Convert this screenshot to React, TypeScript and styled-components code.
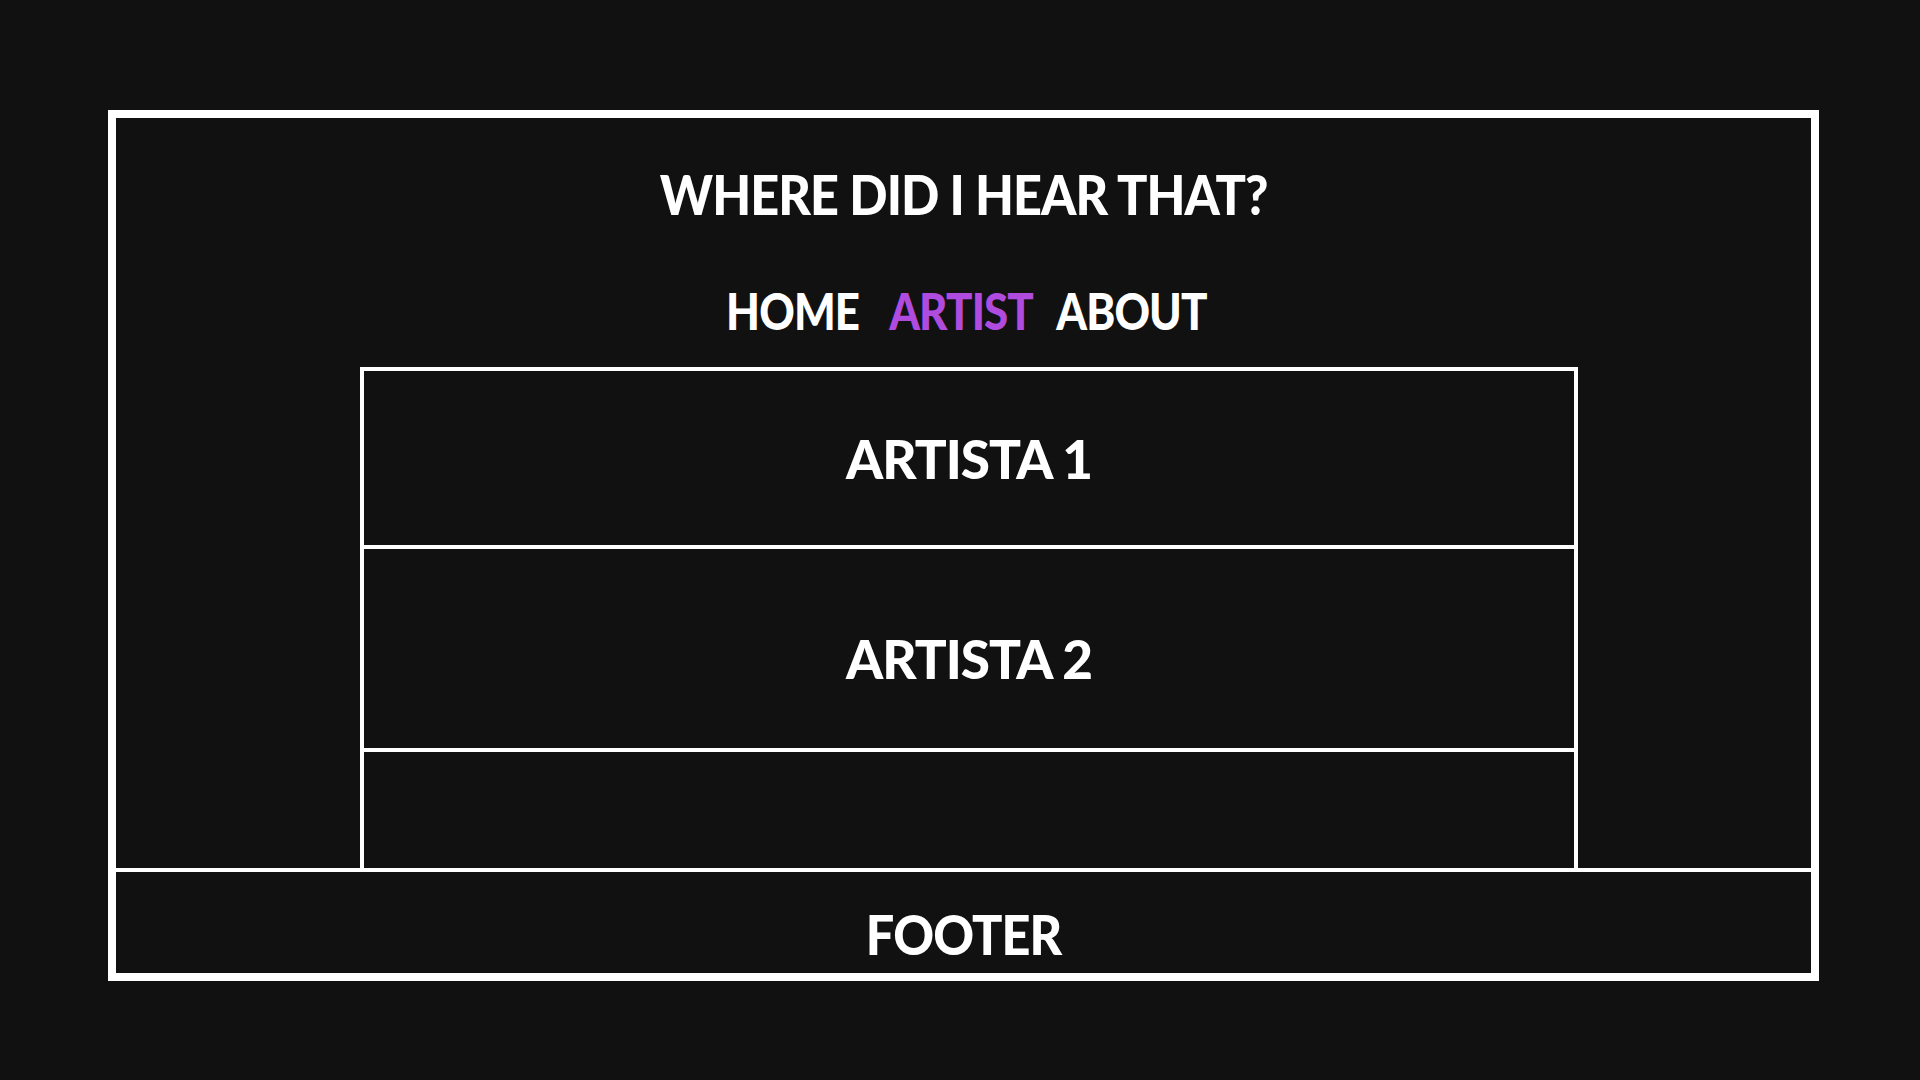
import styled, { createGlobalStyle } from "styled-components";

const GlobalStyle = createGlobalStyle`
  html, body {
    margin: 0;
    padding: 0;
    background: #111111;
  }
  body {
    font-family: Lato, "Noto Sans", sans-serif;
    color: #ffffff;
  }
`;

const artists = ["ARTISTA 1", "ARTISTA 2", ""];

const Frame = styled.div`
  box-sizing: border-box;
  display: flex;
  flex-direction: column;
  width: 1711px;
  height: 871px;
  margin: 110px 0 0 108px;
  border: 8px solid #ffffff;
`;

const Header = styled.header`
  display: flex;
  flex-direction: column;
  align-items: center;
  padding-top: 48px;
`;

// the sketch font is a narrow geometric sans, so Lato is squeezed a bit
const Title = styled.h1`
  margin: 0;
  font-size: 56px;
  font-weight: 900;
  line-height: 1;
  letter-spacing: -1px;
  transform: scaleX(0.9);
`;

const Nav = styled.nav`
  display: flex;
  align-items: center;
  margin-top: 63px;
  transform: translateX(3px) scaleX(0.86);
`;

const NavLink = styled.a<{ $active?: boolean; $gap?: number }>`
  font-size: 51px;
  font-weight: 900;
  line-height: 1;
  letter-spacing: -1px;
  margin-left: ${(p) => p.$gap ?? 0}px;
  color: ${(p) => (p.$active ? "#b04be0" : "#ffffff")};
  text-decoration: none;
`;

const Main = styled.main`
  flex: 1;
  display: flex;
  padding-top: 31px;
`;

const List = styled.section`
  box-sizing: border-box;
  display: flex;
  flex-direction: column;
  width: 1218px;
  margin-left: 244px;
  border: 4px solid #ffffff;
  border-bottom: none;
`;

const Row = styled.div<{ $h?: number; $shift?: number }>`
  box-sizing: border-box;
  display: flex;
  align-items: center;
  justify-content: center;
  height: ${(p) => (p.$h ? `${p.$h}px` : "auto")};
  flex: ${(p) => (p.$h ? "none" : 1)};
  padding-top: ${(p) => p.$shift ?? 0}px;
  border-bottom: ${(p) => (p.$h ? "4px solid #ffffff" : "none")};
`;

const ArtistName = styled.span`
  font-size: 53px;
  font-weight: 900;
  line-height: 1;
  letter-spacing: -1px;
`;

const Footer = styled.footer`
  box-sizing: border-box;
  display: flex;
  align-items: center;
  justify-content: center;
  height: 105px;
  padding-top: 22px;
  border-top: 4px solid #ffffff;
`;

const FooterText = styled.span`
  font-size: 56px;
  font-weight: 900;
  line-height: 1;
  letter-spacing: -1px;
  transform: scaleX(0.9);
`;

export default function App() {
  const rows = [178, 203, 0];
  const shifts = [0, 20, 0];

  return (
    <>
      <GlobalStyle />
      <Frame>
        <Header>
          <Title>WHERE DID I HEAR THAT?</Title>
          <Nav>
            <NavLink href="#">HOME</NavLink>
            <NavLink href="#" $active $gap={35}>ARTIST</NavLink>
            <NavLink href="#" $gap={27}>ABOUT</NavLink>
          </Nav>
        </Header>
        <Main>
          <List>
            {artists.map((name, i) => (
              <Row key={i} $h={rows[i]} $shift={shifts[i]}>
                {name && <ArtistName>{name}</ArtistName>}
              </Row>
            ))}
          </List>
        </Main>
        <Footer>
          <FooterText>FOOTER</FooterText>
        </Footer>
      </Frame>
    </>
  );
}
